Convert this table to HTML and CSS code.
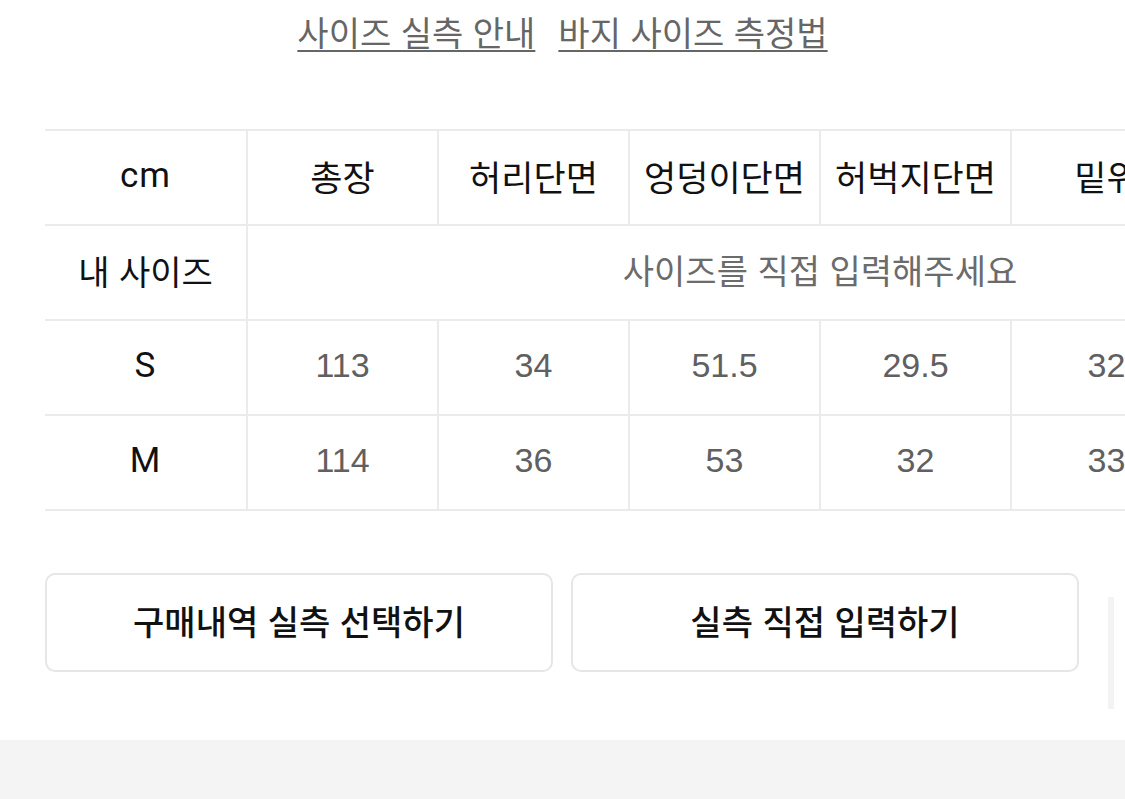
FILE: index.html
```html
<!DOCTYPE html>
<html lang="ko">
<head>
<meta charset="utf-8">
<title>사이즈</title>
<link rel="stylesheet" href="styles.css">
</head>
<body>
<div class="page">
  <nav class="links">
    <a class="link" href="#">사이즈 실측 안내</a>
    <a class="link" href="#">바지 사이즈 측정법</a>
  </nav>

  <div class="table-wrap">
    <table class="size-table">
      <colgroup>
        <col class="c-first">
        <col class="c-data"><col class="c-data"><col class="c-data">
        <col class="c-data"><col class="c-data"><col class="c-data">
      </colgroup>
      <thead>
        <tr>
          <th class="first latin">cm</th>
          <th>총장</th>
          <th>허리단면</th>
          <th>엉덩이단면</th>
          <th>허벅지단면</th>
          <th>밑위</th>
          <th>밑단단면</th>
        </tr>
      </thead>
      <tbody>
        <tr class="my">
          <th class="first ko">내 사이즈</th>
          <td colspan="6" class="placeholder">사이즈를 직접 입력해주세요</td>
        </tr>
        <tr>
          <th class="first latin">S</th>
          <td>113</td><td>34</td><td>51.5</td><td>29.5</td><td>32</td><td>22</td>
        </tr>
        <tr>
          <th class="first latin">M</th>
          <td>114</td><td>36</td><td>53</td><td>32</td><td>33</td><td>23</td>
        </tr>
      </tbody>
    </table>
  </div>

  <div class="actions">
    <button class="btn" type="button">구매내역 실측 선택하기</button>
    <button class="btn" type="button">실측 직접 입력하기</button>
    <span class="edge"></span>
  </div>
</div>
<footer class="footer-band"></footer>
</body>
</html>
```

FILE: styles.css
```css
html, body {
  margin: 0;
  padding: 0;
  background: #ffffff;
  overflow: hidden;
}

body {
  width: 1125px;
  font-family: Roboto, "Noto Sans CJK KR", sans-serif;
  color: #111111;
}

.page {
  padding-top: 9px;
}

.links {
  display: flex;
  justify-content: center;
  gap: 23px;
  height: 53px;
}

.link {
  font-family: "Noto Sans CJK KR", sans-serif;
  font-size: 34px;
  line-height: 46px;
  font-weight: 400;
  color: #666666;
  text-decoration: underline;
  text-decoration-thickness: 2px;
  text-underline-offset: 4px;
}

.table-wrap {
  margin-top: 67px;
  margin-left: 45px;
  overflow: hidden;
}

.size-table {
  border-collapse: collapse;
  table-layout: fixed;
  width: 1348px;
}

.c-first { width: 202px; }
.c-data { width: 191px; }

.size-table th,
.size-table td {
  height: 89px;
  padding: 0 0 4px;
  border: 2px solid #ebebeb;
  text-align: center;
  vertical-align: middle;
  line-height: 40px;
}

.size-table tr > :first-child {
  border-left: none;
}

.size-table th {
  font-family: "Noto Sans CJK KR", sans-serif;
  font-size: 35px;
  font-weight: 400;
  color: #111111;
}

.size-table th.ko {
  font-size: 34px;
}

.size-table th.latin {
  font-family: Roboto, sans-serif;
  font-size: 35px;
  font-weight: 400;
}

.size-table th.latin:first-child {
  letter-spacing: 1px;
}

.size-table td {
  height: 87px;
  padding-bottom: 6px;
  font-family: "Liberation Sans", Arial, sans-serif;
  font-size: 34px;
  font-weight: 400;
  color: #606060;
}

.size-table td.placeholder {
  font-family: "Noto Sans CJK KR", sans-serif;
  font-size: 34px;
  color: #6b6b6b;
}

.actions {
  display: flex;
  align-items: flex-start;
  gap: 18px;
  margin-top: 62px;
  margin-left: 45px;
  height: 167px;
}

.btn {
  width: 508px;
  height: 99px;
  flex: none;
  background: #ffffff;
  border: 2px solid #e6e6e6;
  border-radius: 10px;
  font-family: "Noto Sans CJK KR", sans-serif;
  font-size: 34px;
  font-weight: 500;
  color: #111111;
  padding: 0 0 4px;
}

.edge {
  flex: none;
  width: 6px;
  height: 112px;
  margin-top: 24px;
  margin-left: 11px;
  background: #f3f3f3;
}

.footer-band {
  height: 60px;
  background: #f4f4f4;
}
```
